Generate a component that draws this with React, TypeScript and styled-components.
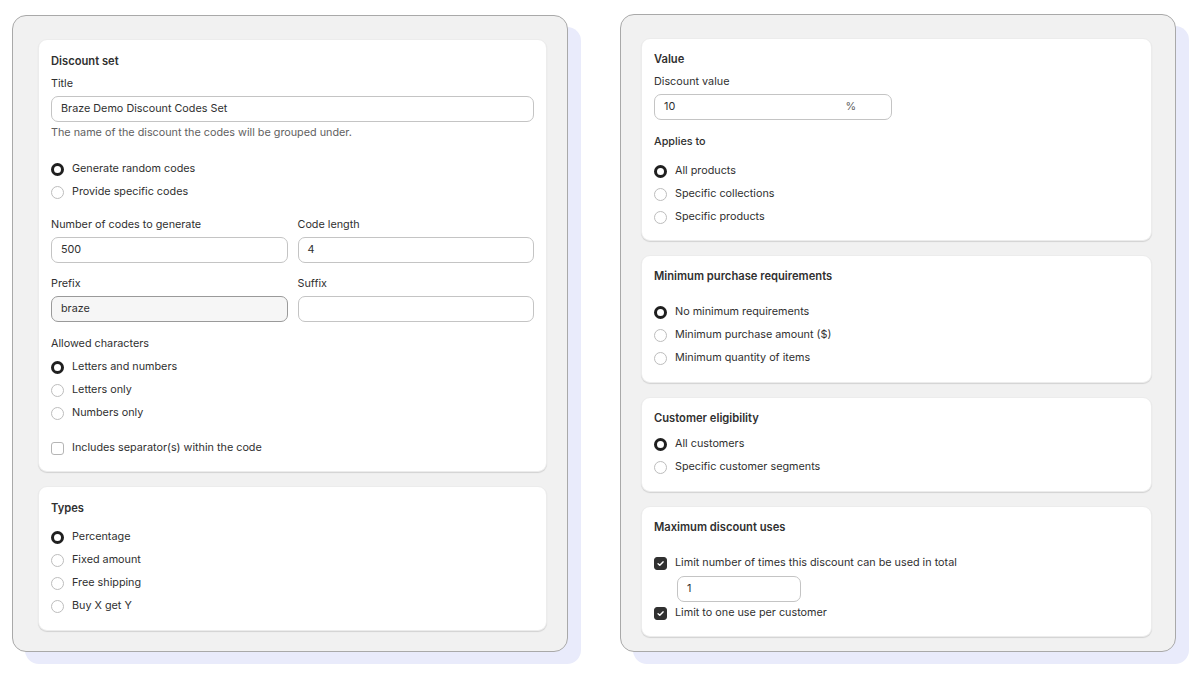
import styled, { createGlobalStyle } from "styled-components";

const GlobalStyle = createGlobalStyle`
  * { box-sizing: border-box; }
  body {
    margin: 0;
    background: #ffffff;
    font-family: Inter, "Noto Sans", "Liberation Sans", sans-serif;
    color: #303030;
    font-size: 10.8px;
  }
`;

const Page = styled.div`
  display: flex;
  align-items: flex-start;
  gap: 52px;
  padding: 14px 0 0 12px;
  width: 1203px;
  height: 677px;
`;

const Window = styled.div<{ $h: number; $pad: string; $top: number }>`
  width: 556px;
  height: ${(p) => p.$h}px;
  margin-top: ${(p) => p.$top}px;
  padding: ${(p) => p.$pad};
  background: #f1f1f1;
  border: 1.5px solid #a9a9a9;
  border-radius: 14px;
  box-shadow: 13px 12px 0 #e9ebfb;
  display: flex;
  flex-direction: column;
  gap: 14px;
`;

const Card = styled.div<{ $pt?: number; $pb?: number }>`
  background: #ffffff;
  border-radius: 9px;
  border: 1px solid #ececec;
  box-shadow: 0 1px 1px rgba(0, 0, 0, 0.13);
  padding: ${(p) => p.$pt ?? 12}px 12px ${(p) => p.$pb ?? 16}px 12px;
  display: flex;
  flex-direction: column;
`;

const Heading = styled.div<{ $mb?: number }>`
  font-weight: 600;
  font-size: 11.2px;
  line-height: 16px;
  margin-bottom: ${(p) => p.$mb ?? 7}px;
`;

const SubHeading = styled.div<{ $mt?: number; $mb?: number; $plain?: boolean }>`
  font-weight: ${(p) => (p.$plain ? 400 : 500)};
  line-height: 16px;
  margin-top: ${(p) => p.$mt ?? 0}px;
  margin-bottom: ${(p) => p.$mb ?? 7}px;
`;

const Label = styled.div`
  line-height: 16px;
  margin-bottom: 4px;
`;

const Field = styled.div<{ $mt?: number }>`
  display: flex;
  flex-direction: column;
  margin-top: ${(p) => p.$mt ?? 0}px;
  min-width: 0;
`;

const FieldRow = styled.div<{ $mt?: number }>`
  display: grid;
  grid-template-columns: 1fr 1fr;
  gap: 10px;
  margin-top: ${(p) => p.$mt ?? 0}px;
`;

const Input = styled.div<{ $muted?: boolean; $w?: number }>`
  height: 26px;
  width: ${(p) => (p.$w ? `${p.$w}px` : "100%")};
  border: 1px solid ${(p) => (p.$muted ? "#9a9a9a" : "#c4c4c4")};
  background: ${(p) => (p.$muted ? "#f6f6f6" : "#ffffff")};
  border-radius: 7px;
  padding: 0 9px;
  display: flex;
  align-items: center;
  justify-content: space-between;
  line-height: 16px;
`;

const Suffix = styled.span`
  color: #616161;
  margin-right: 26px;
`;

const Help = styled.div`
  color: #616161;
  line-height: 16px;
  margin-top: 3px;
`;

const Options = styled.div<{ $mt?: number }>`
  display: flex;
  flex-direction: column;
  gap: 7px;
  margin-top: ${(p) => p.$mt ?? 0}px;
`;

const Option = styled.div`
  display: flex;
  align-items: center;
  gap: 8px;
  line-height: 16px;
  height: 16px;
`;

const Radio = styled.span<{ $on?: boolean }>`
  width: 13px;
  height: 13px;
  border-radius: 50%;
  flex: none;
  background: #ffffff;
  border: ${(p) => (p.$on ? "3.5px solid #1f1f1f" : "1px solid #bdbdbd")};
`;

const Box = styled.span<{ $on?: boolean }>`
  width: 13px;
  height: 13px;
  border-radius: 3px;
  flex: none;
  display: flex;
  align-items: center;
  justify-content: center;
  background: ${(p) => (p.$on ? "#303030" : "#ffffff")};
  border: 1px solid ${(p) => (p.$on ? "#303030" : "#b5b5b5")};
`;

const Indent = styled.div`
  padding-left: 23px;
  margin: 5px 0 3px;
`;

const Check = () => (
  <svg width="9" height="9" viewBox="0 0 10 10">
    <path
      d="M2.3 5.2 4.2 7 7.8 3.2"
      fill="none"
      stroke="#fff"
      strokeWidth="1.6"
      strokeLinecap="round"
      strokeLinejoin="round"
    />
  </svg>
);

function RadioList({ items, active, mt }: { items: string[]; active: number; mt?: number }) {
  return (
    <Options $mt={mt}>
      {items.map((t, i) => (
        <Option key={t}>
          <Radio $on={i === active} />
          {t}
        </Option>
      ))}
    </Options>
  );
}

export default function App() {
  return (
    <>
      <GlobalStyle />
      <Page>
        <Window $h={637} $top={1} $pad="23px 20px 0 25px">
          <Card $pt={13} $pb={15}>
            <Heading>Discount set</Heading>
            <Field>
              <Label>Title</Label>
              <Input>Braze Demo Discount Codes Set</Input>
            </Field>
            <Help>The name of the discount the codes will be grouped under.</Help>
            <RadioList mt={20} active={0} items={["Generate random codes", "Provide specific codes"]} />
            <FieldRow $mt={17}>
              <Field>
                <Label>Number of codes to generate</Label>
                <Input>500</Input>
              </Field>
              <Field>
                <Label>Code length</Label>
                <Input>4</Input>
              </Field>
            </FieldRow>
            <FieldRow $mt={13}>
              <Field>
                <Label>Prefix</Label>
                <Input $muted>braze</Input>
              </Field>
              <Field>
                <Label>Suffix</Label>
                <Input />
              </Field>
            </FieldRow>
            <SubHeading $plain $mt={14} $mb={7}>
              Allowed characters
            </SubHeading>
            <RadioList active={0} items={["Letters and numbers", "Letters only", "Numbers only"]} />
            <Options $mt={19}>
              <Option>
                <Box />
                Includes separator(s) within the code
              </Option>
            </Options>
          </Card>
          <Card $pt={13} $pb={16}>
            <Heading $mb={13}>Types</Heading>
            <RadioList active={0} items={["Percentage", "Fixed amount", "Free shipping", "Buy X get Y"]} />
          </Card>
        </Window>

        <Window $h={638} $top={0} $pad="23px 23px 0 20px">
          <Card $pt={12} $pb={15}>
            <Heading>Value</Heading>
            <Field>
              <Label>Discount value</Label>
              <Input $w={238}>
                10
                <Suffix>%</Suffix>
              </Input>
            </Field>
            <SubHeading $mt={14} $mb={13}>
              Applies to
            </SubHeading>
            <RadioList active={0} items={["All products", "Specific collections", "Specific products"]} />
          </Card>
          <Card $pt={12} $pb={16}>
            <Heading $mb={20}>Minimum purchase requirements</Heading>
            <RadioList
              active={0}
              items={["No minimum requirements", "Minimum purchase amount ($)", "Minimum quantity of items"]}
            />
          </Card>
          <Card $pt={12} $pb={16}>
            <Heading $mb={10}>Customer eligibility</Heading>
            <RadioList active={0} items={["All customers", "Specific customer segments"]} />
          </Card>
          <Card $pt={12} $pb={15}>
            <Heading $mb={20}>Maximum discount uses</Heading>
            <Option>
              <Box $on>
                <Check />
              </Box>
              Limit number of times this discount can be used in total
            </Option>
            <Indent>
              <Input $w={124}>1</Input>
            </Indent>
            <Option>
              <Box $on>
                <Check />
              </Box>
              Limit to one use per customer
            </Option>
          </Card>
        </Window>
      </Page>
    </>
  );
}
